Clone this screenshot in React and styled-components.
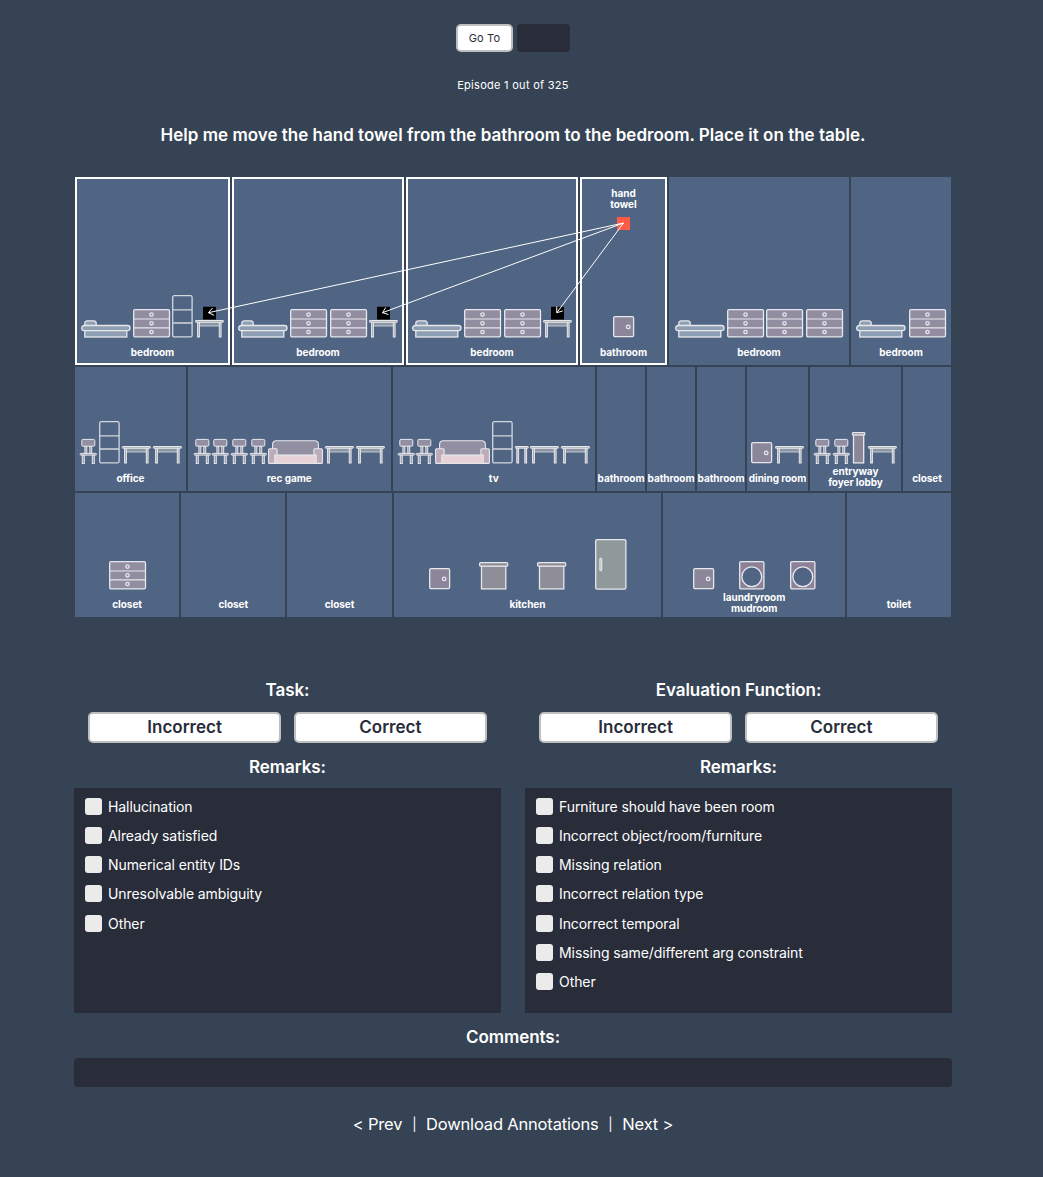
import React from 'react';
import styled, { createGlobalStyle } from 'styled-components';

const GlobalStyle = createGlobalStyle`
  * { box-sizing: border-box; }
  body {
    margin: 0;
    background: #364354;
    color: #fff;
    font-family: Inter, 'Liberation Sans', sans-serif;
  }
`;

const Page = styled.main`
  width: 1026px;
  height: 1177px;
  padding: 24px 74px 0;
  display: flex;
  flex-direction: column;
  align-items: center;
`;

const GoToBar = styled.form`
  display: flex;
  gap: 4px;
  height: 28px;
`;

const Button = styled.button`
  border: 2px solid #bfbfbf;
  border-radius: 5px;
  background: #fff;
  color: #282d39;
  padding: 0;
  font-family: inherit;
  white-space: nowrap;
`;

const GoToButton = styled(Button)`
  width: 57px;
  font-size: 11px;
  letter-spacing: 0.2px;
`;

const Field = styled.input`
  width: ${(p) => p.$width};
  height: ${(p) => p.$height}px;
  border: 0;
  border-radius: 4px;
  padding: 0 8px;
  background: #282d39;
  color: #fff;
  font-family: inherit;
`;

const Counter = styled.div`
  margin-top: 25px;
  line-height: 16px;
  font-size: 11px;
  letter-spacing: 0.28px;
`;

const Title = styled.h1`
  margin: 30px 0 0;
  line-height: 24px;
  font-size: 17px;
  font-weight: 600;
  white-space: nowrap;
  letter-spacing: 0.01px;
`;

const House = styled.section`
  position: relative;
  margin-top: 30px;
  width: 876px;
  display: flex;
  flex-direction: column;
  gap: 2px;
`;

const Floor = styled.div`
  display: flex;
  gap: 2px;
  height: ${(p) => p.$height}px;
`;

const RoomBox = styled.div`
  flex: none;
  width: ${(p) => p.$size}px;
  background: #506483;
  border: 2px solid ${(p) => (p.$active ? '#fff' : 'transparent')};
  display: flex;
  flex-direction: column;
  align-items: center;
  justify-content: space-between;
`;

const Top = styled.div`
  display: flex;
  flex-direction: column;
  align-items: center;
  padding-top: 9px;
  gap: 7px;
`;

const Base = styled.div`
  display: flex;
  flex-direction: column;
  align-items: center;
`;

const Furniture = styled.div`
  display: flex;
  align-items: flex-end;
  gap: ${(p) => p.$gap}px;
  svg { display: block; overflow: visible; flex: none; }
`;

const Label = styled.div`
  height: 25.5px;
  padding-top: ${(p) => (p.$double ? 1 : 5)}px;
  display: flex;
  align-items: center;
`;

const RoomName = styled.span`
  font-size: 10px;
  line-height: 11px;
  font-weight: 700;
  text-align: center;
  white-space: pre;
  letter-spacing: -0.05px;
`;

const TowelMark = styled.div`
  width: 13px;
  height: 12.5px;
  background: #ff5b45;
`;

const Relations = styled.svg`
  position: absolute;
  left: 0;
  top: 0;
  pointer-events: none;
`;

const Reviews = styled.section`
  margin-top: 61px;
  width: 100%;
  display: grid;
  grid-template-columns: 1fr 1fr;
  column-gap: 24px;
`;

const Review = styled.div`
  display: flex;
  flex-direction: column;
`;

const Heading = styled.h2`
  margin: 0;
  line-height: 24px;
  font-size: 17px;
  font-weight: 600;
  text-align: center;
  letter-spacing: -0.06px;
`;

const Verdicts = styled.div`
  display: grid;
  grid-template-columns: 1fr 1fr;
  column-gap: 12.5px;
  padding: 0 14px;
  margin: 10px 0 12px;
`;

const VerdictButton = styled(Button)`
  height: 31px;
  padding-bottom: 1px;
  font-size: 17px;
  font-weight: 600;
`;

const Remarks = styled.div`
  margin-top: 9px;
  height: 225px;
  padding: 10px 11px;
  background: #282d39;
  display: flex;
  flex-direction: column;
  gap: 12.17px;
`;

const Remark = styled.label`
  display: flex;
  align-items: center;
  gap: 6px;
  height: 17px;
  font-size: 14px;
  line-height: 17px;
  letter-spacing: -0.08px;
  white-space: nowrap;
`;

const Checkbox = styled.input`
  appearance: none;
  margin: 0;
  width: 17px;
  height: 17px;
  border-radius: 3px;
  background: #ebebeb;
`;

const Comments = styled.section`
  margin: 12px 0 0;
  width: 100%;
  display: flex;
  flex-direction: column;
  gap: 9px;
`;

const Pager = styled.nav`
  margin-top: 25px;
  display: flex;
  gap: 9.8px;
  font-size: 16.5px;
  line-height: 24px;
  letter-spacing: -0.18px;
  white-space: nowrap;
`;

const Divider = styled.span`
  font-size: 13px;
`;

const line = { stroke: '#e6e8ec', strokeWidth: 1.3 };

const Bed = () => (
  <svg width="49.5" height="17.5" {...line} fill="#8f9fb3">
    <rect x="3.8" y="0.8" width="11.4" height="6" rx="2.5" />
    <rect x="3.8" y="10" width="42" height="7" />
    <rect x="0.7" y="5.5" width="48.3" height="5.2" rx="2.4" />
  </svg>
);

const Dresser = () => (
  <svg width="37" height="28.5" {...line} fill="#938da2">
    <rect x="0.7" y="0.7" width="35.8" height="27.2" rx="1.3" />
    <path d="M1 10h35M1 18.8h35" strokeWidth="1.2" />
    {[5.6, 14.3, 23].map((y) => <circle key={y} cx="18.5" cy={y} r="1.7" />)}
  </svg>
);

const Shelves = () => (
  <svg width="20.5" height="42.5" {...line} fill="none" opacity="0.88">
    <rect x="0.7" y="0.7" width="19.4" height="41.2" rx="1.5" />
    <path d="M1 14.8h19M1 28h19" />
  </svg>
);

const Table = ({ target }) => (
  <svg width="28.7" height="17.5" {...line} fill="#a2a9ae" strokeWidth="1">
    {target && <rect x="8" y="-13.2" width="13" height="12.8" rx="0.6" stroke="none" fill="#000" />}
    <rect x="3.5" y="2" width="22" height="4" opacity="0.75" />
    <rect x="2.6" y="2" width="1.8" height="15" />
    <rect x="24.3" y="2" width="1.8" height="15" />
    <rect x="0.4" y="0.5" width="28" height="1.7" rx="0.4" />
  </svg>
);

const Stool = () => (
  <svg width="13.5" height="17.5" {...line} fill="#b9adba" strokeWidth="1">
    <rect x="1.8" y="2" width="1.8" height="15" />
    <rect x="9.8" y="2" width="1.8" height="15" />
    <rect x="0.4" y="0.5" width="12.8" height="1.7" rx="0.4" />
  </svg>
);

const Chair = () => (
  <svg width="16.5" height="25" {...line} fill="#938fa3" strokeWidth="1">
    <rect x="4.9" y="7.2" width="1.9" height="7.4" />
    <rect x="9.8" y="7.2" width="1.9" height="7.4" />
    <rect x="2.3" y="15.8" width="2" height="8.7" />
    <rect x="12.3" y="15.8" width="2" height="8.7" />
    <rect x="1.8" y="0.4" width="13" height="6.8" rx="1.2" />
    <rect x="0.2" y="14.4" width="16.2" height="1.7" rx="0.5" />
  </svg>
);

const Sofa = () => (
  <svg width="55" height="24" {...line} strokeWidth="1.1">
    <path d="M4.6 22V4.2a3.5 3.5 0 0 1 3.5-3.5h38.8a3.5 3.5 0 0 1 3.5 3.5V22z" fill="#918fa1" />
    <rect x="0.6" y="8.8" width="8.5" height="14.6" rx="1" fill="#bdabb9" />
    <rect x="45.9" y="8.8" width="8.5" height="14.6" rx="1" fill="#bdabb9" />
    <rect x="6.8" y="15" width="41.4" height="8.4" fill="#e6d2d7" />
  </svg>
);

const Cabinet = () => (
  <svg width="21.3" height="21.3" {...line} fill="#8b869a">
    <rect x="0.7" y="0.7" width="19.9" height="19.9" rx="1.3" />
    <circle cx="15.2" cy="10.9" r="1.8" />
  </svg>
);

const Column = () => (
  <svg width="13" height="31.5" {...line} fill="#8d8698">
    <rect x="1.5" y="2.6" width="10.2" height="28.3" />
    <rect x="0.5" y="0.7" width="12.2" height="2.2" rx="0.5" />
  </svg>
);

const KitchenCounter = () => (
  <svg width="29.3" height="27.5" {...line} fill="#8f8d97">
    <rect x="2.5" y="3.8" width="24.3" height="23.1" />
    <rect x="0.6" y="0.7" width="28.1" height="3.4" rx="1.2" />
  </svg>
);

const Fridge = () => (
  <svg width="31.5" height="50.8" {...line} fill="#8f989a">
    <rect x="0.7" y="0.7" width="30.2" height="49.4" rx="1.4" />
    <rect x="4.9" y="19.2" width="1.8" height="12.6" rx="0.8" fill="#b7b4ac" strokeWidth="1.1" />
  </svg>
);

const Washer = () => (
  <svg width="25.5" height="28.5" {...line} fill="#8c8199">
    <rect x="0.7" y="0.7" width="24.2" height="27.1" rx="1.3" />
    <circle cx="12.8" cy="15.7" r="9.9" fill="#506483" />
  </svg>
);

const TargetTable = () => <Table target />;

const kinds = {
  bed: Bed, dresser: Dresser, shelves: Shelves, table: Table, target: TargetTable, stool: Stool,
  chair: Chair, sofa: Sofa, cabinet: Cabinet, column: Column, counter: KitchenCounter,
  fridge: Fridge, washer: Washer,
};

const floors = [
  {
    height: 188,
    rooms: [
      { name: 'bedroom', size: 155, active: true, items: 'bed dresser shelves target', gap: 2.4 },
      { name: 'bedroom', size: 172, active: true, items: 'bed dresser dresser target', gap: 2.4 },
      { name: 'bedroom', size: 172, active: true, items: 'bed dresser dresser target', gap: 2.4 },
      { name: 'bathroom', size: 87, active: true, items: 'cabinet', object: 'hand\ntowel' },
      { name: 'bedroom', size: 180, items: 'bed dresser dresser dresser', gap: 2.4 },
      { name: 'bedroom', size: 100, items: 'bed dresser', gap: 2.6 },
    ],
  },
  {
    height: 124,
    rooms: [
      { name: 'office', size: 111, items: 'chair shelves table table', gap: 2.4 },
      { name: 'rec game', size: 202.5, items: 'chair chair chair chair sofa table table' },
      { name: 'tv', size: 202.5, items: 'chair chair sofa shelves stool table table' },
      { name: 'bathroom', size: 48 },
      { name: 'bathroom', size: 48 },
      { name: 'bathroom', size: 48 },
      { name: 'dining room', size: 61, items: 'cabinet table' },
      { name: 'entryway\nfoyer lobby', size: 91, items: 'chair chair column table', gap: 2.5 },
      { name: 'closet', size: 48 },
    ],
  },
  {
    height: 124,
    rooms: [
      { name: 'closet', size: 104.2, items: 'dresser' },
      { name: 'closet', size: 104.2 },
      { name: 'closet', size: 104.2 },
      { name: 'kitchen', size: 267.8, items: 'cabinet counter counter fridge', gap: 28.7 },
      { name: 'laundryroom\nmudroom', size: 181.6, items: 'cabinet washer washer', gap: 24.9 },
      { name: 'toilet', size: 104 },
    ],
  },
];

function Room({ room }) {
  const items = room.items ? room.items.split(' ') : [];
  return (
    <RoomBox $size={room.size} $active={room.active}>
      <Top>
        {room.object && (
          <>
            <RoomName>{room.object}</RoomName>
            <TowelMark />
          </>
        )}
      </Top>
      <Base>
        <Furniture $gap={room.gap || 2.1}>
          {items.map((kind, i) => {
            const Piece = kinds[kind];
            return <Piece key={i} />;
          })}
        </Furniture>
        <Label $double={room.name.includes('\n')}>
          <RoomName>{room.name}</RoomName>
        </Label>
      </Base>
    </RoomBox>
  );
}

const origin = [548.5, 46];
const targets = [[133.5, 135.7], [307.5, 135.7], [481.8, 135.7]];

function Arrow({ tip: [x, y] }) {
  const angle = Math.atan2(origin[1] - y, origin[0] - x);
  const wing = (turn) => `${x + 6.2 * Math.cos(angle + turn)} ${y + 6.2 * Math.sin(angle + turn)}`;
  return <path d={`M${origin.join(' ')}L${x} ${y}M${wing(0.65)}L${x} ${y}L${wing(-0.65)}`} />;
}

function ReviewForm({ title, remarks }) {
  return (
    <Review>
      <Heading>{title}</Heading>
      <Verdicts>
        <VerdictButton>Incorrect</VerdictButton>
        <VerdictButton>Correct</VerdictButton>
      </Verdicts>
      <Heading>Remarks:</Heading>
      <Remarks>
        {remarks.map((text) => (
          <Remark key={text}>
            <Checkbox type="checkbox" />
            {text}
          </Remark>
        ))}
      </Remarks>
    </Review>
  );
}

const taskRemarks = ['Hallucination', 'Already satisfied', 'Numerical entity IDs', 'Unresolvable ambiguity', 'Other'];
const evaluationRemarks = [
  'Furniture should have been room', 'Incorrect object/room/furniture', 'Missing relation',
  'Incorrect relation type', 'Incorrect temporal', 'Missing same/different arg constraint', 'Other',
];

export default function App() {
  return (
    <>
      <GlobalStyle />
      <Page>
        <GoToBar>
          <GoToButton type="button">Go To</GoToButton>
          <Field $width="53px" $height={28} />
        </GoToBar>
        <Counter>Episode 1 out of 325</Counter>
        <Title>Help me move the hand towel from the bathroom to the bedroom. Place it on the table.</Title>
        <House>
          {floors.map((floor, i) => (
            <Floor key={i} $height={floor.height}>
              {floor.rooms.map((room, j) => <Room key={j} room={room} />)}
            </Floor>
          ))}
          <Relations width="876" height="188" fill="none" stroke="#fff" strokeWidth="1">
            {targets.map((tip) => <Arrow key={tip[0]} tip={tip} />)}
          </Relations>
        </House>
        <Reviews>
          <ReviewForm title="Task:" remarks={taskRemarks} />
          <ReviewForm title="Evaluation Function:" remarks={evaluationRemarks} />
        </Reviews>
        <Comments>
          <Heading>Comments:</Heading>
          <Field $width="100%" $height={29} />
        </Comments>
        <Pager>
          <span>&lt; Prev</span>
          <Divider>|</Divider>
          <span>Download Annotations</span>
          <Divider>|</Divider>
          <span>Next &gt;</span>
        </Pager>
      </Page>
    </>
  );
}
